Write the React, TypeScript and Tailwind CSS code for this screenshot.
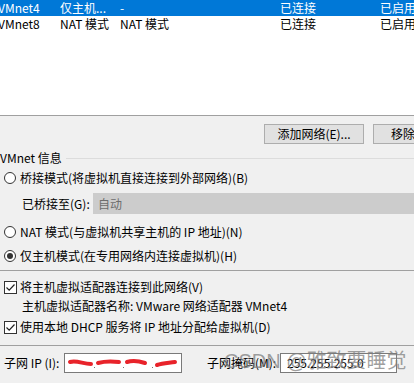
const font = "font-['Noto_Sans_CJK_SC','Noto_Sans',sans-serif]";

function Radio({ checked, label }: { checked?: boolean; label: string }) {
  return (
    <div className="flex h-4 items-center pl-[4px]">
      <span className="flex h-[12px] w-[12px] items-center justify-center rounded-full border border-[#333] bg-white">
        {checked && <span className="h-[6px] w-[6px] rounded-full bg-[#333]" />}
      </span>
      <span className="ml-[4px] whitespace-nowrap">{label}</span>
    </div>
  );
}

function Check({ label }: { label: string }) {
  return (
    <div className="flex h-4 items-center pl-[4px]">
      <span className="flex h-[13px] w-[13px] items-center justify-center border border-[#333] bg-white">
        <svg width="11" height="11" viewBox="0 0 11 11">
          <path d="M1.5 5.5 L4.2 8.2 L9.5 2.5" fill="none" stroke="#222" strokeWidth="1.2" />
        </svg>
      </span>
      <span className="ml-[3px] whitespace-nowrap">{label}</span>
    </div>
  );
}

function Row({ cells, selected }: { cells: string[]; selected?: boolean }) {
  const xs = ["w-[62px]", "w-[60px]", "w-[160px]", "w-[100px]", "w-[60px]"];
  return (
    <div
      className={`flex h-4 items-center whitespace-nowrap leading-4 ${
        selected ? "bg-[#0078d7] text-white" : "text-black"
      }`}
    >
      {cells.map((c, i) => (
        <span key={i} className={`${xs[i]} shrink-0 overflow-hidden`}>
          {c}
        </span>
      ))}
    </div>
  );
}

function Scribble() {
  return (
    <svg width="116" height="18" viewBox="0 0 116 18" className="absolute left-0 top-0">
      <g stroke="#e8232a" strokeWidth="4" strokeLinecap="round" fill="none">
        <path d="M5 8 C12 6 18 10 26 10" />
        <path d="M33 9 C40 7 46 7 54 8" />
        <path d="M62 8 C68 6 74 7 80 9" />
        <path d="M92 11 C98 9 104 9 110 8" />
      </g>
      <g fill="#777">
        <rect x="29" y="13" width="1" height="1" />
        <rect x="58" y="13" width="1" height="1" />
        <rect x="87" y="13" width="1" height="1" />
      </g>
    </svg>
  );
}

export default function App() {
  return (
    <div className={`${font} relative h-[383px] w-[414px] overflow-hidden bg-[#f0f0f0] text-[12px] text-black`}>
      {/* list */}
      <div className="h-[116px] border-b border-[#a0a0a0] bg-white">
        <div className="-ml-[2px]">
          <Row selected cells={["VMnet4", "仅主机...", "-", "已连接", "已启用"]} />
          <Row cells={["VMnet8", "NAT 模式", "NAT 模式", "已连接", "已启用"]} />
        </div>
      </div>

      {/* buttons */}
      <div className="mt-[8px] flex h-[20px] pl-[264px]">
        <button className="h-[20px] w-[100px] shrink-0 border border-[#adadad] bg-[#e1e1e1] leading-none">
          添加网络(E)...
        </button>
        <button className="ml-[9px] h-[20px] w-[60px] shrink-0 border border-[#adadad] bg-[#e1e1e1] leading-none">
          移除
        </button>
      </div>

      {/* group */}
      <div className="mt-[6px] flex h-4 items-center">
        <span className="whitespace-nowrap">VMnet 信息</span>
        <span className="ml-[4px] h-px flex-1 bg-[#dcdcdc]" />
      </div>

      <div className="mt-[4px]">
        <Radio label="桥接模式(将虚拟机直接连接到外部网络)(B)" />
      </div>

      <div className="mt-[7px] flex h-[21px] items-center pl-[22px]">
        <span className="w-[71px] whitespace-nowrap">已桥接至(G):</span>
        <div className="flex h-[21px] flex-1 items-center border border-[#cccccc] bg-[#cccccc] pl-[4px] text-[#6d6d6d]">
          自动
        </div>
      </div>

      <div className="mt-[10px]">
        <Radio label="NAT 模式(与虚拟机共享主机的 IP 地址)(N)" />
      </div>
      <div className="mt-[8px]">
        <Radio checked label="仅主机模式(在专用网络内连接虚拟机)(H)" />
      </div>

      <div className="mt-[6px] h-px bg-[#a0a0a0]" />

      <div className="mt-[8px]">
        <Check label="将主机虚拟适配器连接到此网络(V)" />
      </div>
      <div className="mt-[3px] flex h-4 items-center whitespace-nowrap pl-[22px]">
        主机虚拟适配器名称: VMware 网络适配器 VMnet4
      </div>
      <div className="mt-[5px]">
        <Check label="使用本地 DHCP 服务将 IP 地址分配给虚拟机(D)" />
      </div>

      <div className="mt-[10px] h-px bg-[#a0a0a0]" />

      <div className="mt-[7px] flex h-[20px] items-center">
        <span className="w-[64px] whitespace-nowrap pl-[4px]">子网 IP (I):</span>
        <div className="relative h-[20px] w-[118px] shrink-0 border border-[#7a7a7a] bg-white">
          <Scribble />
        </div>
        <span className="ml-[25px] w-[73px] whitespace-nowrap">子网掩码(M):</span>
        <div className="flex h-[20px] w-[117px] shrink-0 items-center border border-[#7a7a7a] bg-white pl-[6px]">
          255.255.255.0
        </div>
      </div>

      {/* watermark */}
      <div className="pointer-events-none absolute left-[224px] top-[351px] whitespace-nowrap text-[20px] leading-none text-[#808080]/75 font-['Liberation_Sans','Noto_Sans_CJK_SC',sans-serif]">
        CSDN @雅致要睡觉
      </div>
    </div>
  );
}
